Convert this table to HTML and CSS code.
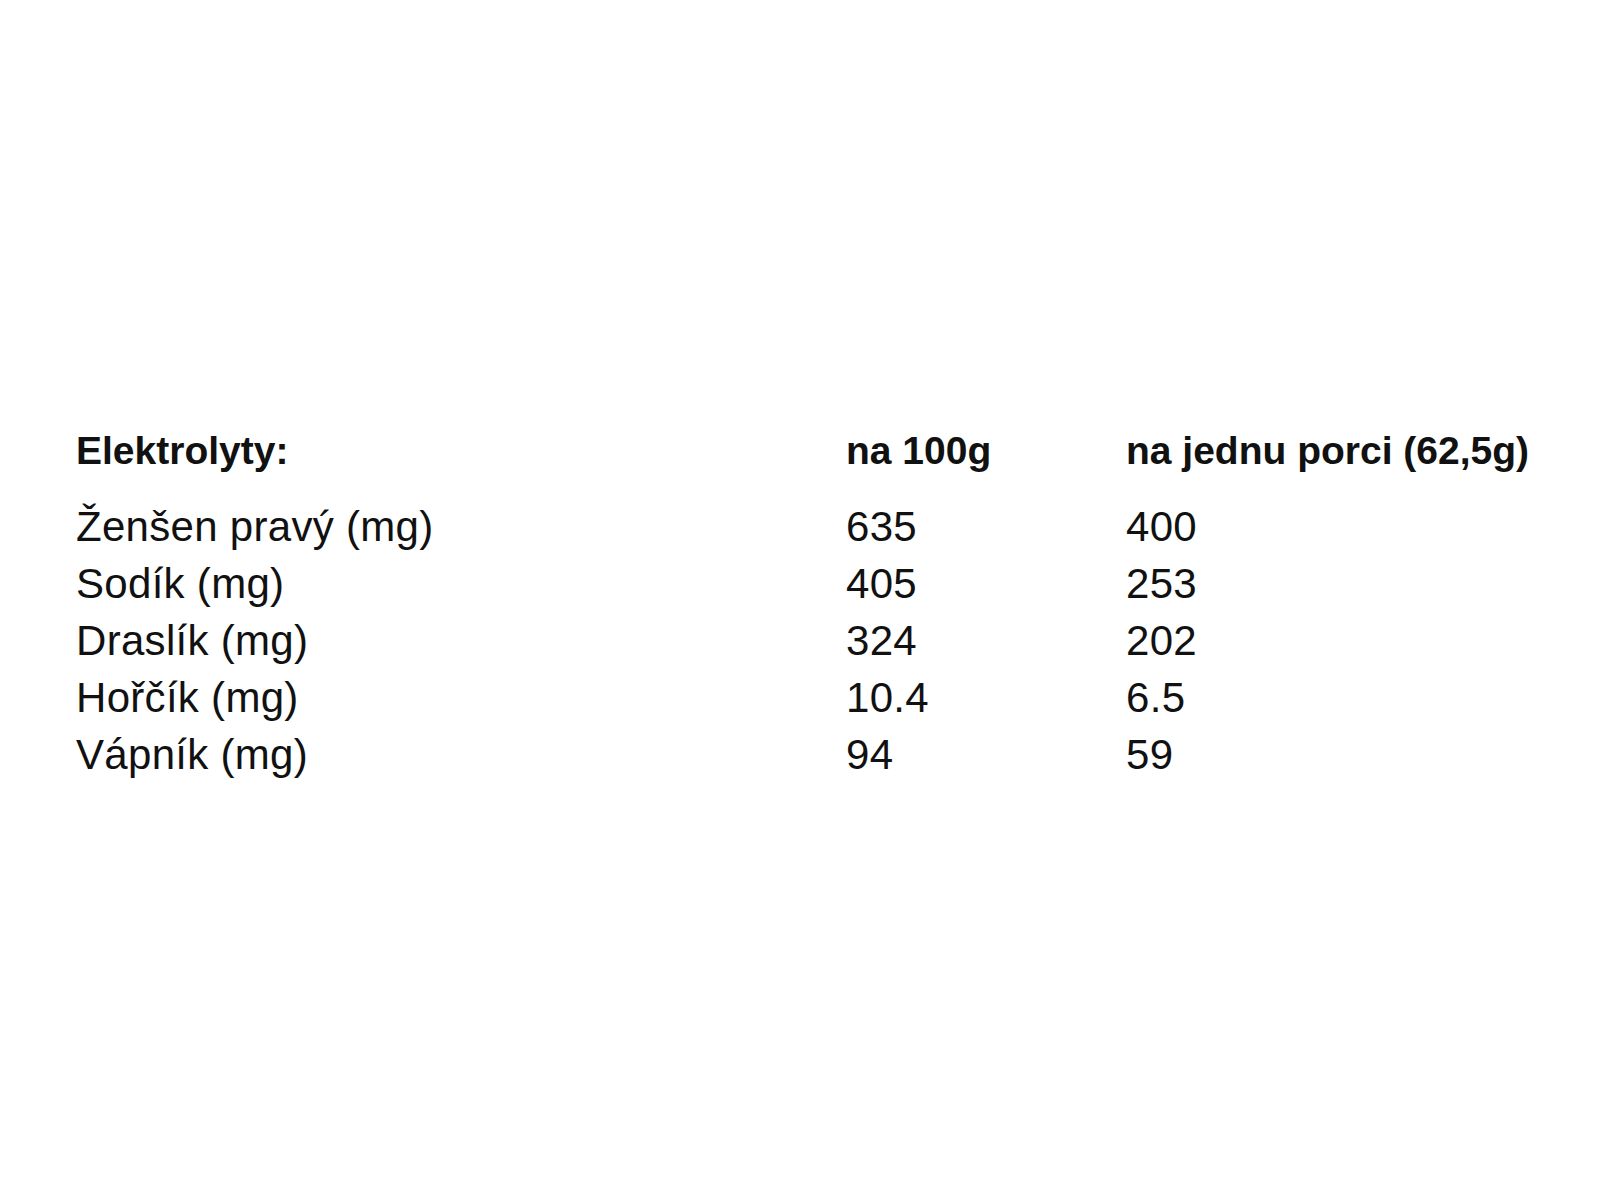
FILE: index.html
```html
<!DOCTYPE html>
<html lang="cs">
<head>
<meta charset="utf-8">
<title>Elektrolyty</title>
<link rel="stylesheet" href="styles.css">
</head>
<body>
<main class="page">
  <table class="nutri">
    <thead>
      <tr>
        <th class="c1">Elektrolyty:</th>
        <th class="c2">na 100g</th>
        <th class="c3">na jednu porci (62,5g)</th>
      </tr>
    </thead>
    <tbody>
      <tr><td>Ženšen pravý (mg)</td><td>635</td><td>400</td></tr>
      <tr><td>Sodík (mg)</td><td>405</td><td>253</td></tr>
      <tr><td>Draslík (mg)</td><td>324</td><td>202</td></tr>
      <tr><td>Hořčík (mg)</td><td>10.4</td><td>6.5</td></tr>
      <tr><td>Vápník (mg)</td><td>94</td><td>59</td></tr>
    </tbody>
  </table>
</main>
</body>
</html>
```

FILE: styles.css
```css
html, body {
  margin: 0;
  padding: 0;
  background: #ffffff;
}

body {
  font-family: "Liberation Sans", Arial, sans-serif;
  color: #111111;
}

.page {
  min-height: 100vh;
  display: flex;
  align-items: flex-start;
  padding-top: 428px;
  padding-left: 76px;
  box-sizing: border-box;
}

.nutri {
  border-collapse: collapse;
  border-spacing: 0;
}

.nutri th,
.nutri td {
  padding: 0;
  text-align: left;
  vertical-align: baseline;
  white-space: nowrap;
}

.nutri th {
  font-size: 39px;
  font-weight: 700;
  line-height: 46px;
  padding-bottom: 24px;
}

.nutri td {
  font-size: 42px;
  font-weight: 400;
  line-height: 57px;
  letter-spacing: 0.3px;
}

.c1 { width: 770px; }
.c2 { width: 280px; }
```
